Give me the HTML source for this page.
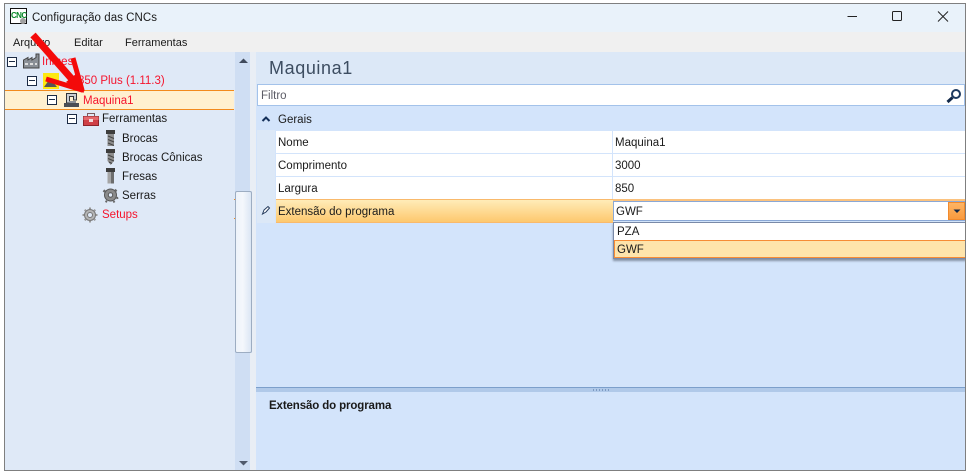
<!DOCTYPE html>
<html><head><meta charset="utf-8">
<style>
html,body{margin:0;padding:0;background:#fff}
#r{position:relative;width:970px;height:476px;overflow:hidden;background:#fff;font-family:"Liberation Sans",sans-serif;font-size:11.5px;color:#1a1a1a}
#r div{position:absolute;box-sizing:border-box}
.t{white-space:nowrap;line-height:18px;height:18px}
.red{color:#f5142d}
.exp{width:10px;height:10px;border:1px solid #1c2b45;background:#fff}
.exp:after{content:"";position:absolute;left:1px;top:3px;width:6px;height:1px;background:#1c2b45}
svg{position:absolute;overflow:visible}
</style></head><body>
<div id="r">
<!-- frame -->
<div style="left:4px;top:3px;width:963px;height:468px;background:#dce8f7;border:1px solid #7f7f7f"></div>
<div style="left:5px;top:4px;width:961px;height:28px;background:#e9f2fa"></div>
<div style="left:5px;top:32px;width:961px;height:20px;background:#f0f0f0"></div>
<!-- title icon -->
<div style="left:10px;top:8px;width:17px;height:16px;background:#fff;border:1px solid #111"></div>
<div class="t" style="left:11px;top:9px;width:15px;font-size:8px;font-weight:bold;color:#0a8a2a;letter-spacing:-.6px;line-height:13px">CNC</div>
<div style="left:20px;top:18px;width:6px;height:6px;background:#a0a0a0;border-radius:50%"></div>
<div class="t" style="left:32px;top:9px;font-size:11.5px;letter-spacing:.05px">Configuração das CNCs</div>
<!-- window controls -->
<svg style="left:0;top:0" width="970" height="40"><path d="M847.500 16.500H857" stroke="#222" fill="none"/><rect x="892.500" y="11.500" width="9" height="9" rx="1" stroke="#222" fill="none"/><path d="M938 11.500L948 21.500M948 11.500L938 21.500" stroke="#222" fill="none"/></svg>
<!-- menu -->
<div class="t" style="left:13px;top:34px;font-size:11px">Arquivo</div>
<div class="t" style="left:74px;top:34px;font-size:11px">Editar</div>
<div class="t" style="left:125px;top:34px;font-size:11px">Ferramentas</div>

<!-- tree -->
<div style="left:5px;top:52px;width:230px;height:418px;background:#dfe9f7"></div>
<div style="left:5px;top:90px;width:229px;height:20px;background:#fff0cf;border-top:1px solid #f28a1c;border-bottom:1px solid #f28a1c"></div>
<div class="exp" style="left:7px;top:57px"></div>
<div class="exp" style="left:27px;top:76px"></div>
<div class="exp" style="left:47px;top:95px"></div>
<div class="exp" style="left:67px;top:114px"></div>

<svg style="left:0;top:0" width="240" height="230">
 <!-- factory -->
 <path d="M23.500 68V60L28 57.500V60L32 57.500V60L36 57.500V54H39V68Z" fill="#8a8f96" stroke="#444"/>
 <path d="M25 64h3M30 64h3M35 64h2" stroke="#ddd" stroke-width="2"/>
 <!-- machine (yellow) -->
 <rect x="43" y="73" width="16" height="16" fill="#fde910"/>
 <path d="M44 87L49 80L53 82L57 87Z" fill="#555"/>
 <!-- Maquina icon -->
 <path d="M66.500 93.500H76.500V100H73.500V96.500H69.500V103H66.500Z" fill="#c9cdd2" stroke="#30343a"/>
 <rect x="64" y="103" width="15" height="4" fill="#4a4e55"/>
 <rect x="69" y="101" width="7" height="2" fill="#8a8f96"/>
 <!-- toolbox -->
 <path d="M83.500 116.500H98.500V125.500H83.500Z" fill="#cf3f46" stroke="#8e2229"/>
 <path d="M83.500 116.500H98.500V120H83.500Z" fill="#e4686d"/>
 <path d="M87.500 116V113.500H94.500V116" fill="none" stroke="#7c5b5f"/>
 <rect x="89" y="119" width="4" height="3" fill="#f2d9da"/>
 <!-- brocas -->
 <rect x="106" y="130" width="9" height="4" fill="#3d3d3d"/><rect x="107.500" y="134" width="6.500" height="12" fill="#8d8d8d"/><path d="M108 136L114 138.500M108 139.500L114 142M108 143L114 145.500" stroke="#444"/>
 <rect x="106" y="149" width="9" height="4" fill="#3d3d3d"/><path d="M107.500 153H114V161L110.700 165L107.500 161Z" fill="#8d8d8d"/><path d="M108 155L114 157.500M108 158.500L114 161M109 162L112 163.500" stroke="#444"/>
 <rect x="106" y="168" width="9" height="4" fill="#3d3d3d"/><rect x="107.500" y="172" width="6.500" height="11.500" fill="#a5a5a5"/><rect x="111" y="172" width="3" height="11.500" fill="#6d6d6d"/>
 <!-- serra -->
 <circle cx="110.500" cy="195" r="6" fill="#8b8b8b" stroke="#555" stroke-width="1"/>
 <path d="M105 190L103.500 192M115 189.500L116.500 191.500M117 197L117.500 199M107 201L105.500 202M113.500 201L114.500 202.500" stroke="#666" stroke-width="2"/>
 <circle cx="110.500" cy="195" r="2.200" fill="#dfe9f7" stroke="#555"/>
 <!-- setups gear -->
 <circle cx="90" cy="215" r="5.500" fill="#b5b5b5" stroke="#777" stroke-width="1"/>
 <circle cx="90" cy="215" r="2.500" fill="#dfe9f7" stroke="#777"/>
 <path d="M90 207.500V209M90 221V222.500M82.500 215H84M96 215H97.500M84.700 209.700L85.800 210.800M94.200 219.200L95.300 220.300M95.300 209.700L94.200 210.800M85.800 219.200L84.700 220.300" stroke="#999" stroke-width="2"/>
</svg>

<div class="t red" style="left:42px;top:53px">Inmes</div>
<div class="t red" style="left:78px;top:72px">850 Plus (1.11.3)</div>
<div class="t red" style="left:83px;top:92px;">Maquina1</div>
<div class="t" style="left:102px;top:110px">Ferramentas</div>
<div class="t" style="left:122px;top:130px">Brocas</div>
<div class="t" style="left:122px;top:149px">Brocas Cônicas</div>
<div class="t" style="left:122px;top:168px">Fresas</div>
<div class="t" style="left:122px;top:187px">Serras</div>
<div class="t red" style="left:102px;top:206px">Setups</div>

<!-- scrollbar -->
<div style="left:235px;top:52px;width:15px;height:418px;background:#cfdef3"></div>
<div style="left:234px;top:199px;width:1px;height:1px;background:#f28a1c"></div>
<div style="left:234px;top:218px;width:1px;height:1px;background:#f28a1c"></div>
<div style="left:235px;top:191px;width:17px;height:162px;background:linear-gradient(90deg,#eef3fa 0,#f4f7fc 45%,#dbe6f4 100%);border:1px solid #9dadc2;border-radius:2px"></div>
<svg style="left:0;top:0" width="260" height="470"><path d="M239 63L243.500 58.500L248 63Z" fill="#404a5c"/><path d="M239 461L243.500 465.500L248 461Z" fill="#505a6c"/></svg>
<div style="left:252px;top:52px;width:4px;height:418px;background:#e9eef5"></div>
<div style="left:250px;top:52px;width:2px;height:139px;background:#e9eef5"></div>
<div style="left:250px;top:353px;width:2px;height:117px;background:#e9eef5"></div>

<!-- right -->
<div style="left:256px;top:52px;width:710px;height:32px;background:#dce8f7"></div>
<div class="t" style="left:269px;top:57px;height:22px;line-height:22px;font-size:18px;letter-spacing:.6px;color:#3d4d61">Maquina1</div>
<div style="left:257px;top:84px;width:708px;height:22px;background:#fff;border:1px solid #a3c2ea"></div>
<div class="t" style="left:261px;top:87px;color:#5c5c66">Filtro</div>
<svg style="left:0;top:0" width="970" height="110"><circle cx="956" cy="94" r="4" fill="none" stroke="#1d3a60" stroke-width="2"/><path d="M952.500 97.500L947.500 102" stroke="#12294a" stroke-width="3"/></svg>

<div style="left:256px;top:106px;width:710px;height:282px;background:#d3e4fb"></div>
<svg style="left:0;top:0" width="280" height="130"><path d="M262.500 121L266 117.500L269.500 121" fill="none" stroke="#14305a" stroke-width="2"/></svg>
<div class="t" style="left:278px;top:111px">Gerais</div>

<div style="left:257px;top:130px;width:19px;height:93px;background:#dce8f7"></div>
<div style="left:276px;top:130px;width:690px;height:69px;background:#fff"></div>
<div style="left:276px;top:130px;width:690px;height:1px;background:#d3e4fb"></div>
<div style="left:276px;top:153px;width:690px;height:1px;background:#d3e4fb"></div>
<div style="left:276px;top:176px;width:690px;height:1px;background:#d3e4fb"></div>
<div style="left:275px;top:130px;width:1px;height:93px;background:#d3e4fb"></div>
<div style="left:612px;top:130px;width:1px;height:69px;background:#d3e4fb"></div>
<div class="t" style="left:278px;top:134px">Nome</div>
<div class="t" style="left:278px;top:157px">Comprimento</div>
<div class="t" style="left:278px;top:180px">Largura</div>
<div class="t" style="left:615px;top:134px">Maquina1</div>
<div class="t" style="left:615px;top:157px">3000</div>
<div class="t" style="left:615px;top:180px">850</div>

<!-- active row -->
<div style="left:276px;top:199px;width:337px;height:24px;background:linear-gradient(#ffecb8,#fdc86e);border-top:1px solid #f9b96b;border-bottom:1px solid #f9b96b"></div>
<div class="t" style="left:278px;top:203px">Extensão do programa</div>
<svg style="left:0;top:0" width="280" height="225"><path d="M262.500 214L264 210L268 206.500L269.500 208L266 212Z" fill="#fff" stroke="#243a5c"/></svg>
<div style="left:613px;top:199px;width:353px;height:2px;background:#fbc27e"></div>
<div style="left:613px;top:201px;width:353px;height:20px;background:#fff;border:1px solid #8aa8d6"></div>
<div class="t" style="left:616px;top:203px">GWF</div>
<div style="left:948px;top:202px;width:17px;height:18px;background:linear-gradient(#fdb463,#f99a3e);border:1px solid #f28a2c"></div>
<svg style="left:0;top:0" width="970" height="225"><path d="M953.500 209.500H960.500L957 213Z" fill="#12294a"/></svg>
<!-- dropdown -->
<div style="left:613px;top:222px;width:353px;height:37px;background:#fff;border:1px solid #7a8aa8;box-shadow:0 2px 2px #8591a4"></div>
<div class="t" style="left:617px;top:223px">PZA</div>
<div style="left:614px;top:240px;width:352px;height:18px;background:#fee4ab;border:1px solid #f68c35"></div>
<div class="t" style="left:617px;top:241px">GWF</div>

<!-- splitter -->
<div style="left:256px;top:387px;width:710px;height:1px;background:#7c9fcb"></div>
<div style="left:256px;top:388px;width:710px;height:4px;background:#b0c9e9"></div>
<svg style="left:0;top:0" width="970" height="395"><path d="M593 390h1M596 390h1M599 390h1M602 390h1M605 390h1M608 390h1" stroke="#4a6a9a"/></svg>
<div style="left:256px;top:392px;width:710px;height:78px;background:#d3e4fb"></div>
<div class="t" style="left:269px;top:397px;font-weight:bold;font-size:11.5px;letter-spacing:-.12px">Extensão do programa</div>

<!-- right edge -->
<div style="left:965px;top:3px;width:1px;height:468px;background:#7f7f7f"></div>
<div style="left:966px;top:0;width:4px;height:476px;background:#fff"></div>

<!-- red arrow -->
<svg style="left:0;top:0" width="130" height="110">
 <path d="M33 35L78 86" stroke="#f40a0a" stroke-width="7" fill="none"/>
 <path d="M73 58L82 90L46 79" stroke="#f40a0a" stroke-width="5" fill="none" stroke-linejoin="round"/>
 <path d="M84 93L76 74L66 82Z" fill="#f40a0a"/>
</svg>
</div>
</body></html>
